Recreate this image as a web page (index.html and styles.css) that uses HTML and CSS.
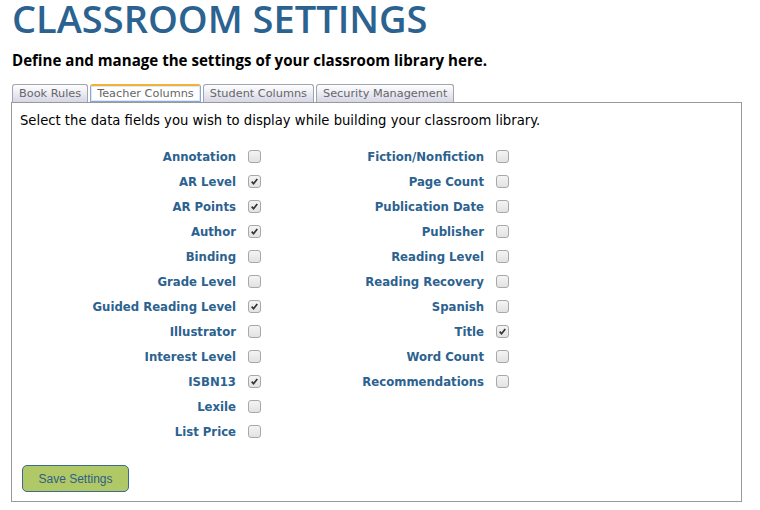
FILE: index.html
```html
<!DOCTYPE html>
<html>
<head>
<meta charset="utf-8">
<link rel="stylesheet" href="styles.css">
</head>
<body>
<div class="page">
  <h1 class="title">CLASSROOM SETTINGS</h1>
  <p class="subtitle">Define and manage the settings of your classroom library here.</p>
  <div class="tabs">
    <span class="tab">Book Rules</span>
    <span class="tab active">Teacher Columns</span>
    <span class="tab">Student Columns</span>
    <span class="tab">Security Management</span>
  </div>
  <div class="panel">
    <p class="intro">Select the data fields you wish to display while building your classroom library.</p>
    <div class="fields">
      <div class="col col-left">
        <span class="lbl">Annotation</span><span class="cb"></span>
        <span class="lbl">AR Level</span><span class="cb on"><svg viewBox="0 0 13 13"><path d="M3.2 6.6 L5.4 9.2 L9.8 3.6" /></svg></span>
        <span class="lbl">AR Points</span><span class="cb on"><svg viewBox="0 0 13 13"><path d="M3.2 6.6 L5.4 9.2 L9.8 3.6" /></svg></span>
        <span class="lbl">Author</span><span class="cb on"><svg viewBox="0 0 13 13"><path d="M3.2 6.6 L5.4 9.2 L9.8 3.6" /></svg></span>
        <span class="lbl">Binding</span><span class="cb"></span>
        <span class="lbl">Grade Level</span><span class="cb"></span>
        <span class="lbl">Guided Reading Level</span><span class="cb on"><svg viewBox="0 0 13 13"><path d="M3.2 6.6 L5.4 9.2 L9.8 3.6" /></svg></span>
        <span class="lbl">Illustrator</span><span class="cb"></span>
        <span class="lbl">Interest Level</span><span class="cb"></span>
        <span class="lbl">ISBN13</span><span class="cb on"><svg viewBox="0 0 13 13"><path d="M3.2 6.6 L5.4 9.2 L9.8 3.6" /></svg></span>
        <span class="lbl">Lexile</span><span class="cb"></span>
        <span class="lbl">List Price</span><span class="cb"></span>
      </div>
      <div class="col col-right">
        <span class="lbl">Fiction/Nonfiction</span><span class="cb"></span>
        <span class="lbl">Page Count</span><span class="cb"></span>
        <span class="lbl">Publication Date</span><span class="cb"></span>
        <span class="lbl">Publisher</span><span class="cb"></span>
        <span class="lbl">Reading Level</span><span class="cb"></span>
        <span class="lbl">Reading Recovery</span><span class="cb"></span>
        <span class="lbl">Spanish</span><span class="cb"></span>
        <span class="lbl">Title</span><span class="cb on"><svg viewBox="0 0 13 13"><path d="M3.2 6.6 L5.4 9.2 L9.8 3.6" /></svg></span>
        <span class="lbl">Word Count</span><span class="cb"></span>
        <span class="lbl">Recommendations</span><span class="cb"></span>
      </div>
    </div>
    <button class="save">Save Settings</button>
  </div>
</div>
</body>
</html>
```
FILE: styles.css
```css
html, body {
  margin: 0;
  padding: 0;
  background: #ffffff;
}
.page {
  padding: 0 0 0 11px;
  width: 731px;
}
.title {
  margin: 0;
  padding-left: 1px;
  font-family: "Open Sans", sans-serif;
  font-weight: 600;
  font-size: 38px;
  line-height: 36px;
  letter-spacing: 0;
  color: #2b6290;
}
.subtitle {
  margin: 14px 0 0 1px;
  font-family: "Open Sans", sans-serif;
  font-weight: 700;
  font-size: 15.1px;
  line-height: 20px;
  color: #000;
}
.tabs {
  display: flex;
  gap: 2px;
  margin-top: 14px;
  padding-left: 1px;
  height: 18px;
  align-items: flex-end;
}
.tab {
  box-sizing: border-box;
  height: 18px;
  padding: 0 6px;
  border: 1px solid #a0a4ac;
  border-bottom: none;
  border-radius: 3px 3px 0 0;
  background: linear-gradient(#ffffff, #d6d6e6);
  font-family: "DejaVu Sans", Verdana, sans-serif;
  font-size: 11.3px;
  line-height: 17px;
  color: #666;
}
.tab.active {
  border: 1px solid #86a8d8;
  border-top: 2px solid #f2b233;
  background: #fff;
  line-height: 15px;
  box-shadow: inset 0 0 0 1px #dde8f6;
}
.panel {
  border: 1px solid #999;
  padding: 0 0 9px 0;
}
.intro {
  margin: 10px 0 0 8px;
  font-family: "DejaVu Sans", Verdana, sans-serif;
  font-size: 13.2px;
  line-height: 16px;
  color: #000;
}
.fields {
  display: flex;
  margin-top: 15px;
}
.col {
  display: grid;
  grid-auto-rows: 25px;
  column-gap: 12px;
  align-items: center;
}
.col-left {
  grid-template-columns: 224px 13px;
}
.col-right {
  margin-left: 73px;
  grid-template-columns: 150px 13px;
}
.lbl {
  text-align: right;
  font-family: "DejaVu Sans", Verdana, sans-serif;
  font-weight: 700;
  font-size: 11.7px;
  color: #2b6290;
  white-space: nowrap;
}
.cb {
  box-sizing: border-box;
  width: 13px;
  height: 13px;
  border: 1px solid #a8a8a8;
  border-radius: 3px;
  background: linear-gradient(#f4f4f4, #e2e2e2);
  display: block;
}
.cb svg {
  display: block;
  width: 11px;
  height: 11px;
}
.cb svg path {
  fill: none;
  stroke: #333;
  stroke-width: 2;
}
.save {
  display: block;
  margin: 21px 0 0 10px;
  width: 107px;
  height: 27px;
  border: 1px solid #3d6a8e;
  border-radius: 5px;
  background: #b1c866;
  font-family: "Liberation Sans", Arial, sans-serif;
  font-size: 12px;
  color: #2f5f86;
  padding: 0;
}
```
